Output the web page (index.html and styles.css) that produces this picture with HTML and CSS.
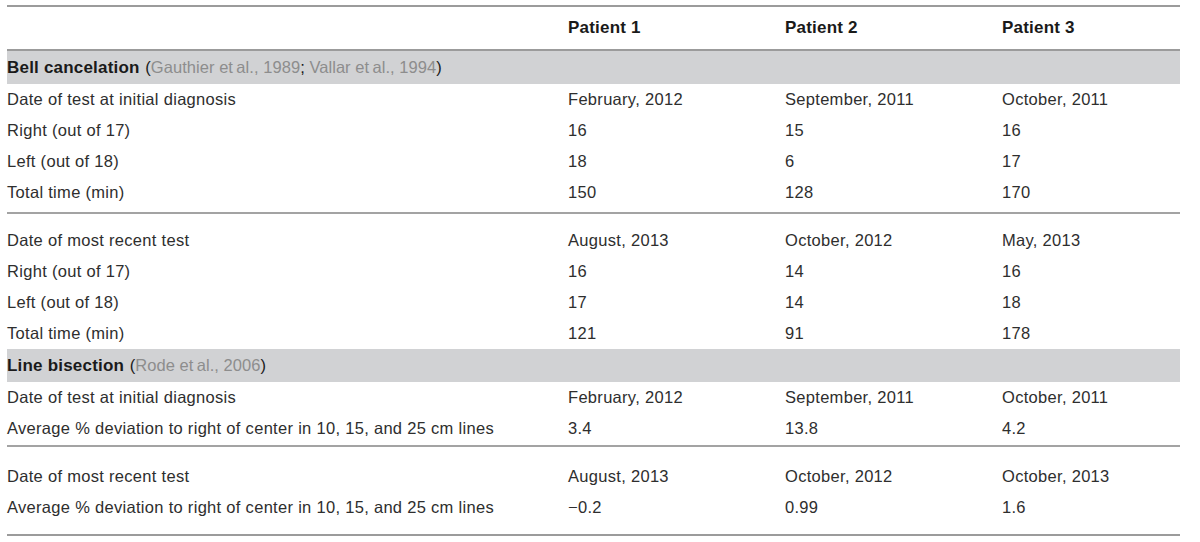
FILE: index.html
```html
<!DOCTYPE html>
<html lang="en">
<head>
<meta charset="utf-8">
<title>Patient test results</title>
<link rel="stylesheet" href="styles.css">
</head>
<body>
<table class="results">
  <colgroup>
    <col class="col-label">
    <col class="col-p">
    <col class="col-p">
    <col class="col-last">
  </colgroup>
  <thead>
    <tr>
      <th></th>
      <th>Patient 1</th>
      <th>Patient 2</th>
      <th>Patient 3</th>
    </tr>
  </thead>
  <tbody>
    <tr class="band">
      <td colspan="4"><b>Bell cancelation</b> (<span class="cite">Gauthier et&#8201;al., 1989</span>; <span class="cite">Vallar et&#8201;al., 1994</span>)</td>
    </tr>
    <tr><td>Date of test at initial diagnosis</td><td>February, 2012</td><td>September, 2011</td><td>October, 2011</td></tr>
    <tr><td>Right (out of 17)</td><td>16</td><td>15</td><td>16</td></tr>
    <tr><td>Left (out of 18)</td><td>18</td><td>6</td><td>17</td></tr>
    <tr class="end"><td>Total time (min)</td><td>150</td><td>128</td><td>170</td></tr>
    <tr class="start"><td>Date of most recent test</td><td>August, 2013</td><td>October, 2012</td><td>May, 2013</td></tr>
    <tr><td>Right (out of 17)</td><td>16</td><td>14</td><td>16</td></tr>
    <tr><td>Left (out of 18)</td><td>17</td><td>14</td><td>18</td></tr>
    <tr><td>Total time (min)</td><td>121</td><td>91</td><td>178</td></tr>
    <tr class="band">
      <td colspan="4"><b>Line bisection</b> (<span class="cite">Rode et&#8201;al., 2006</span>)</td>
    </tr>
    <tr><td>Date of test at initial diagnosis</td><td>February, 2012</td><td>September, 2011</td><td>October, 2011</td></tr>
    <tr class="end end-tight"><td>Average % deviation to right of center in 10, 15, and 25 cm lines</td><td>3.4</td><td>13.8</td><td>4.2</td></tr>
    <tr class="start start-wide"><td>Date of most recent test</td><td>August, 2013</td><td>October, 2012</td><td>October, 2013</td></tr>
    <tr class="last"><td>Average % deviation to right of center in 10, 15, and 25 cm lines</td><td>&#8722;0.2</td><td>0.99</td><td>1.6</td></tr>
  </tbody>
</table>
</body>
</html>
```
FILE: styles.css
```css
html, body {
  background: #ffffff;
}
body {
  margin: 0;
  padding: 5px 0 0 7px;
  font-family: "Liberation Sans", Arial, Helvetica, sans-serif;
  color: #2e2e2e;
}
.results {
  border-collapse: collapse;
  table-layout: fixed;
  width: 1172px;
  border-top: 2px solid #9b9b9b;
  border-bottom: 2px solid #9b9b9b;
}
.col-label { width: 561px; }
.col-p { width: 217px; }
.col-last { width: 178px; }

.results th,
.results td {
  padding: 0;
  font-size: 16.5px;
  line-height: 31px;
  text-align: left;
  vertical-align: middle;
  white-space: nowrap;
  letter-spacing: 0.3px;
  font-weight: normal;
}
.results thead th {
  font-size: 17px;
  font-weight: bold;
  letter-spacing: 0.2px;
  line-height: 42px;
  border-bottom: 2px solid #9b9b9b;
  color: #1a1a1a;
}
.results .band td {
  background: #d1d2d4;
  line-height: 32px;
  color: #1a1a1a;
  letter-spacing: 0.05px;
}
.results .band b {
  font-size: 17px;
  font-weight: bold;
  letter-spacing: 0.2px;
  margin-right: 1px;
}
.cite {
  color: #8d8d8d;
}
.results tr.end td {
  padding-bottom: 4px;
  border-bottom: 2px solid #a3a3a3;
}
.results tr.start td {
  padding-top: 11px;
}
.results tr.end-tight td {
  padding-bottom: 1px;
}
.results tr.start-wide td {
  padding-top: 14px;
}
.results tr.last td {
  padding-bottom: 11px;
}
```
